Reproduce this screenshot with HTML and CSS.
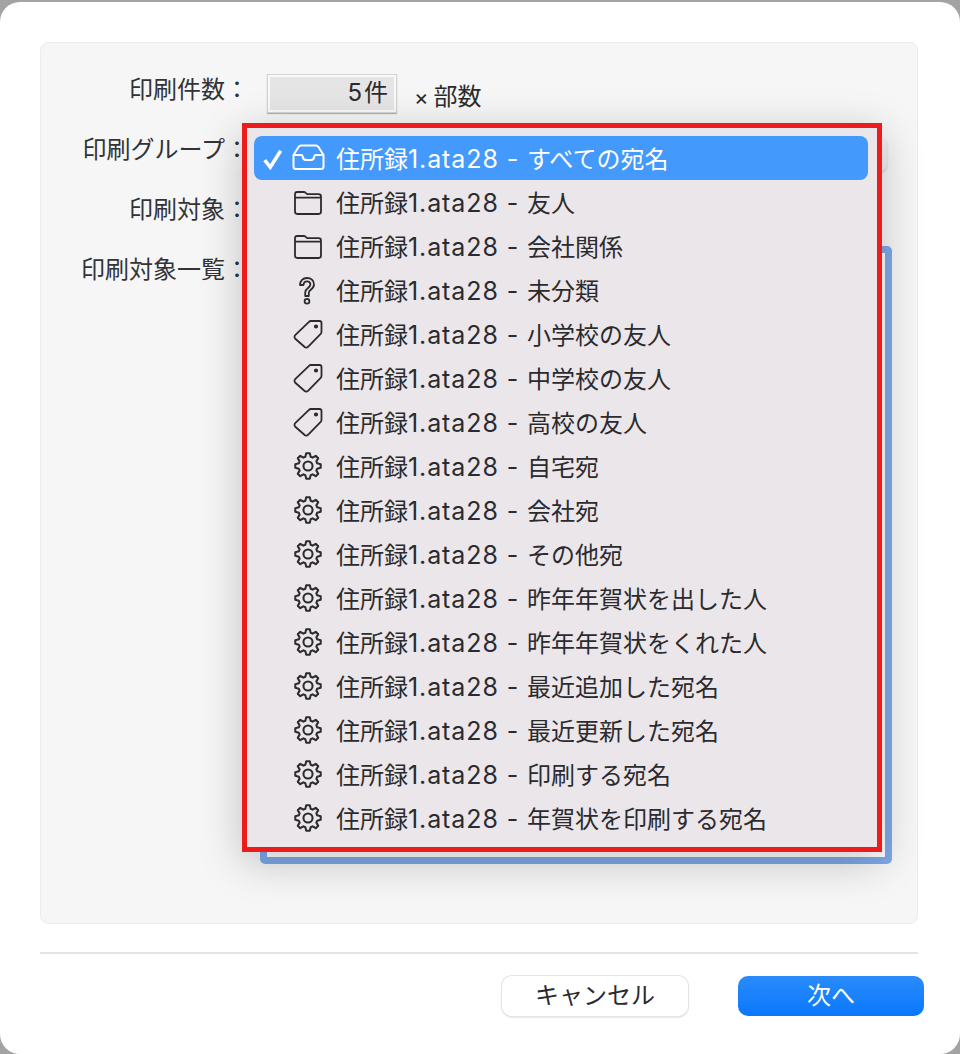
FILE: index.html
```html
<!DOCTYPE html>
<html lang="ja">
<head>
<meta charset="utf-8">
<title>印刷</title>
<link rel="stylesheet" href="styles.css">
</head>
<body>
<svg class="defs" width="0" height="0" aria-hidden="true">
  <symbol id="i-inbox" viewBox="0 0 34 26">
    <path d="M10 1.5H25C26 1.5 26.8 2 27.3 2.8L32.5 11V22.5C32.5 24 31.5 25 30 25H5C3.5 25 2.5 24 2.5 22.5V11L7.7 2.8C8.2 2 9 1.5 10 1.5ZM2.5 11H10.2C11 11 11.5 11.5 11.7 12.5 12 14.5 13 16 15 16H20C22 16 23 14.5 23.3 12.5 23.5 11.5 24 11 24.8 11H32.5"/>
  </symbol>
  <symbol id="i-folder" viewBox="0 0 28 24">
    <path d="M1 4.2V20.6C1 21.9 2 23 3.3 23H24.7C26 23 27 21.9 27 20.6V5.6C27 4.3 26 3.2 24.7 3.2H13.4L11.4 1.6C11 1.2 10.5 1 9.9 1H3.3C2 1 1 2.1 1 3.4V4.2ZM1 6.6H27"/>
  </symbol>
  <symbol id="i-question" viewBox="0 0 16 28">
    <path d="M1 8C1 3.5 4 1 8 1 12 1 15 3.5 15 7.5 15 10.5 13 12 11 13.5 10 14.3 9.8 15 9.8 16V19H6.2V15.5C6.2 13.5 7.3 12.3 9 11 10.5 9.8 11.4 9 11.4 7.5 11.4 5.6 10 4.4 8 4.4 6 4.4 4.7 5.6 4.5 8Z"/>
    <circle cx="8" cy="24.2" r="2.4"/>
  </symbol>
  <symbol id="i-tag" viewBox="0 0 30 30">
    <path d="M18 2H26.5A2 2 0 0 1 28.5 4V13A2.5 2.5 0 0 1 27.7 14.8L15 27.8A2.5 2.5 0 0 1 11.4 27.8L2.3 19.8A2.5 2.5 0 0 1 2.2 16.2L16 2.8A2.5 2.5 0 0 1 18 2Z"/>
    <circle class="dot" cx="23" cy="7.5" r="1.2"/>
  </symbol>
  <symbol id="i-gear" viewBox="0 0 24 24">
    <path d="M9.74 4.12 10.47 1.11H13.53L14.26 4.12 15.98 4.83 18.62 3.22 20.78 5.38 19.17 8.02 19.88 9.74 22.89 10.47V13.53L19.88 14.26 19.17 15.98 20.78 18.62 18.62 20.78 15.98 19.17 14.26 19.88 13.53 22.89H10.47L9.74 19.88 8.02 19.17 5.38 20.78 3.22 18.62 4.83 15.98 4.12 14.26 1.11 13.53V10.47L4.12 9.74 4.83 8.02 3.22 5.38 5.38 3.22 8.02 4.83Z"/>
    <circle cx="12" cy="12" r="3.9"/>
  </symbol>
</svg>

<main class="window">
  <section class="panel">
    <div class="row row-count">
      <span class="label">印刷件数：</span>
      <div class="count-field">5件</div>
      <span class="suffix"><span class="times">×</span>部数</span>
    </div>
    <div class="row row-group">
      <span class="label">印刷グループ：</span>
      <div class="select"></div>
    </div>
    <div class="row row-target">
      <span class="label">印刷対象：</span>
    </div>
    <div class="row row-list">
      <span class="label">印刷対象一覧：</span>
      <div class="listbox"></div>
    </div>
  </section>

  <hr class="separator">

  <footer class="actions">
    <button class="btn btn-cancel" type="button">キャンセル</button>
    <button class="btn btn-next" type="button">次へ</button>
  </footer>

  <ul class="menu">
    <li class="item selected">
      <svg class="check" viewBox="0 0 20 20"><path d="M2.5 11 7.5 17.5 17 2.5"/></svg>
      <svg class="icon icon-inbox"><use href="#i-inbox"/></svg>
      <span class="text">住所録<span class="ext">1.ata28 - </span>すべての宛名</span>
    </li>
    <li class="item"><svg class="icon icon-folder"><use href="#i-folder"/></svg><span class="text">住所録<span class="ext">1.ata28 - </span>友人</span></li>
    <li class="item"><svg class="icon icon-folder"><use href="#i-folder"/></svg><span class="text">住所録<span class="ext">1.ata28 - </span>会社関係</span></li>
    <li class="item"><svg class="icon icon-question"><use href="#i-question"/></svg><span class="text">住所録<span class="ext">1.ata28 - </span>未分類</span></li>
    <li class="item"><svg class="icon"><use href="#i-tag"/></svg><span class="text">住所録<span class="ext">1.ata28 - </span>小学校の友人</span></li>
    <li class="item"><svg class="icon"><use href="#i-tag"/></svg><span class="text">住所録<span class="ext">1.ata28 - </span>中学校の友人</span></li>
    <li class="item"><svg class="icon"><use href="#i-tag"/></svg><span class="text">住所録<span class="ext">1.ata28 - </span>高校の友人</span></li>
    <li class="item"><svg class="icon icon-gear"><use href="#i-gear"/></svg><span class="text">住所録<span class="ext">1.ata28 - </span>自宅宛</span></li>
    <li class="item"><svg class="icon icon-gear"><use href="#i-gear"/></svg><span class="text">住所録<span class="ext">1.ata28 - </span>会社宛</span></li>
    <li class="item"><svg class="icon icon-gear"><use href="#i-gear"/></svg><span class="text">住所録<span class="ext">1.ata28 - </span>その他宛</span></li>
    <li class="item"><svg class="icon icon-gear"><use href="#i-gear"/></svg><span class="text">住所録<span class="ext">1.ata28 - </span>昨年年賀状を出した人</span></li>
    <li class="item"><svg class="icon icon-gear"><use href="#i-gear"/></svg><span class="text">住所録<span class="ext">1.ata28 - </span>昨年年賀状をくれた人</span></li>
    <li class="item"><svg class="icon icon-gear"><use href="#i-gear"/></svg><span class="text">住所録<span class="ext">1.ata28 - </span>最近追加した宛名</span></li>
    <li class="item"><svg class="icon icon-gear"><use href="#i-gear"/></svg><span class="text">住所録<span class="ext">1.ata28 - </span>最近更新した宛名</span></li>
    <li class="item"><svg class="icon icon-gear"><use href="#i-gear"/></svg><span class="text">住所録<span class="ext">1.ata28 - </span>印刷する宛名</span></li>
    <li class="item"><svg class="icon icon-gear"><use href="#i-gear"/></svg><span class="text">住所録<span class="ext">1.ata28 - </span>年賀状を印刷する宛名</span></li>
  </ul>
</main>
</body>
</html>
```
FILE: styles.css
```css
* { box-sizing: border-box; }

html, body {
  margin: 0;
  height: 1054px;
  overflow: hidden;
}

body {
  background: #a3a3a3;
  padding-top: 2px;
  font-family: "Noto Sans CJK JP", sans-serif;
  font-size: 24px;
  color: #2b2b2e;
}

.defs { position: absolute; }

.window {
  position: relative;
  height: 1052px;
  padding: 40px 42px 0 40px;
  background: #fff;
  border-radius: 20px;
}

.panel {
  height: 882px;
  padding: 31px 0 0;
  background: #f6f6f6;
  border: 1px solid #ececec;
  border-radius: 8px;
}

.row {
  display: flex;
  align-items: flex-start;
}

.label {
  flex: none;
  width: 208px;
  height: 28px;
  line-height: 28px;
  text-align: right;
  white-space: nowrap;
  margin-right: 18px;
  color: #333336;
}

.row-count { height: 39px; }
.row-group { height: 38px; margin-top: 21px; }
.row-target { height: 28px; margin-top: 22px; }
.row-list { margin-top: 31px; }
.row-list .label { margin-top: 1px; }

.count-field {
  width: 130px;
  height: 39px;
  padding-right: 4px;
  background: #e5e5e5;
  border: 3px solid #f9f9f9;
  outline: 1px solid #d3d3d3;
  outline-offset: -1px;
  box-shadow: 0 1px 1px #b5b5b5;
  line-height: 31px;
  text-align: right;
  letter-spacing: 2px;
  font-family: Inter, "Noto Sans CJK JP", sans-serif;
}

.suffix {
  margin: 7px 0 0 17px;
  line-height: 28px;
  white-space: nowrap;
}

.times {
  font-family: Inter, sans-serif;
  font-size: 22px;
  margin-right: 5px;
}

.select {
  width: 620px;
  height: 35px;
  margin-top: 3px;
  background: #f0f0f0;
  border-radius: 8px;
  box-shadow: 0 1px 2px #c4c4c4;
}

.listbox {
  width: 632px;
  height: 618px;
  margin: -7px 0 0 -7px;
  background: #fff;
  border: 7px solid #7ea9e8;
  border-radius: 5px;
}

.separator {
  height: 2px;
  margin: 28px 0 0;
  border: 0;
  background: #e4e4e4;
}

.actions {
  display: flex;
  justify-content: flex-end;
  gap: 50px;
  margin: 22px -6px 0 0;
}

.btn {
  width: 186px;
  height: 40px;
  padding: 0 0 4px;
  border: 0;
  border-radius: 10px;
  font-family: "Noto Sans CJK JP", sans-serif;
  font-size: 24px;
  line-height: 36px;
}

.btn-cancel {
  background: #fff;
  color: #2b2b2e;
  box-shadow: 0 0 0 1px #e6e6e6, 0 1px 2px #b0b0b0;
}

.btn-next {
  background: linear-gradient(#2a8bfb, #0a78fb);
  color: #fff;
}

.menu {
  position: absolute;
  left: 242px;
  top: 121px;
  width: 640px;
  height: 729px;
  margin: 0;
  padding: 8px 9px 0 7px;
  list-style: none;
  background: #ebe6ea;
  border: 5px solid #ed1c1c;
  box-shadow: 0 10px 40px rgba(0, 0, 0, .22);
}

.item {
  position: relative;
  height: 44px;
  padding-left: 82px;
  display: flex;
  align-items: center;
  border-radius: 8px;
  white-space: nowrap;
  color: #2b2b2e;
}

.text { margin-top: -1px; }

.ext {
  font-family: Inter, sans-serif;
  font-size: 25px;
  letter-spacing: .9px;
}

.item.selected {
  background: #4499fd;
  color: #fff;
}

.icon {
  position: absolute;
  left: 39px;
  top: 7px;
  width: 30px;
  height: 30px;
  fill: none;
  stroke: currentColor;
  stroke-width: 1.8;
  stroke-linejoin: round;
  stroke-linecap: round;
  overflow: visible;
}

.dot { fill: currentColor; }

.item .icon-inbox { left: 37px; top: 8px; width: 34px; height: 26px; stroke-width: 2; }
.item .icon-folder { left: 40px; top: 11px; width: 28px; height: 24px; }
.item .icon-question { left: 45px; top: 9px; width: 16px; height: 28px; stroke-width: 1.8; }
.item .icon-gear { left: 40px; top: 8px; width: 28px; height: 28px; stroke-width: 1.75; }

.check {
  position: absolute;
  left: 8px;
  top: 12px;
  width: 22px;
  height: 22px;
  fill: none;
  stroke: #fff;
  stroke-width: 3.2;
}
```
